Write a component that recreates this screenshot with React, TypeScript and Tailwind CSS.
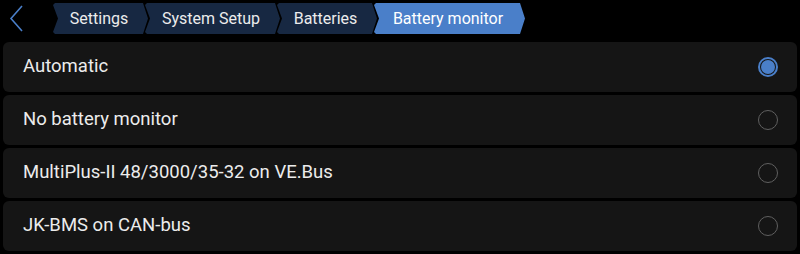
import React from "react";

const crumbs = [
  { label: "Settings", w: "w-[95px]", active: false },
  { label: "System Setup", w: "w-[135px]", active: false },
  { label: "Batteries", w: "w-[100px]", active: false },
  { label: "Battery monitor", w: "w-[151px]", active: true },
];

const options = [
  { label: "Automatic", selected: true },
  { label: "No battery monitor", selected: false },
  { label: "MultiPlus-II 48/3000/35-32 on VE.Bus", selected: false },
  { label: "JK-BMS on CAN-bus", selected: false },
];

function Radio({ selected }: { selected: boolean }) {
  if (selected) {
    return (
      <div className="w-[20px] h-[20px] rounded-full border-2 border-[#4a7fc9] flex items-center justify-center">
        <div className="w-[14px] h-[14px] rounded-full bg-[#4a7fc9]" />
      </div>
    );
  }
  return <div className="w-[20px] h-[20px] rounded-full border-[1.5px] border-[#5f5f5f]" />;
}

export default function App() {
  return (
    <div
      className="w-[800px] h-[254px] bg-black text-[#ececec] overflow-hidden"
      style={{ fontFamily: "Roboto, 'Noto Sans', sans-serif" }}
    >
      <div className="flex items-start h-[42px] pt-[3px]">
        <div className="w-[53px] h-[31px] flex items-center pl-[9px]">
          <svg width="15" height="27" viewBox="0 0 15 27" fill="none">
            <path d="M13 1 L2 13.5 L13 26" stroke="#4a7fc9" strokeWidth="1.6" />
          </svg>
        </div>
        <div className="flex items-center">
          {crumbs.map((c, i) => (
            <div
              key={c.label}
              className={`${c.w} h-[31px] flex items-center justify-center pr-[3px] text-[16px] ${
                i > 0 ? "-ml-[3px]" : ""
              } ${c.active ? "bg-[#4a7fc9] text-white" : "bg-[#172842] text-[#ececec]"} [clip-path:polygon(2px_0,calc(100%-5px)_0,100%_50%,calc(100%-5px)_100%,2px_100%,0_calc(100%-2px),5px_50%,0_2px)]`}
            >
              {c.label}
            </div>
          ))}
        </div>
      </div>
      <div className="flex flex-col gap-[3px] px-[3px]">
        {options.map((o) => (
          <div
            key={o.label}
            className="h-[50px] rounded-[6px] bg-[#151515] flex items-center justify-between pl-[20px] pr-[19px]"
          >
            <span className="text-[18.5px]">{o.label}</span>
            <Radio selected={o.selected} />
          </div>
        ))}
      </div>
    </div>
  );
}
